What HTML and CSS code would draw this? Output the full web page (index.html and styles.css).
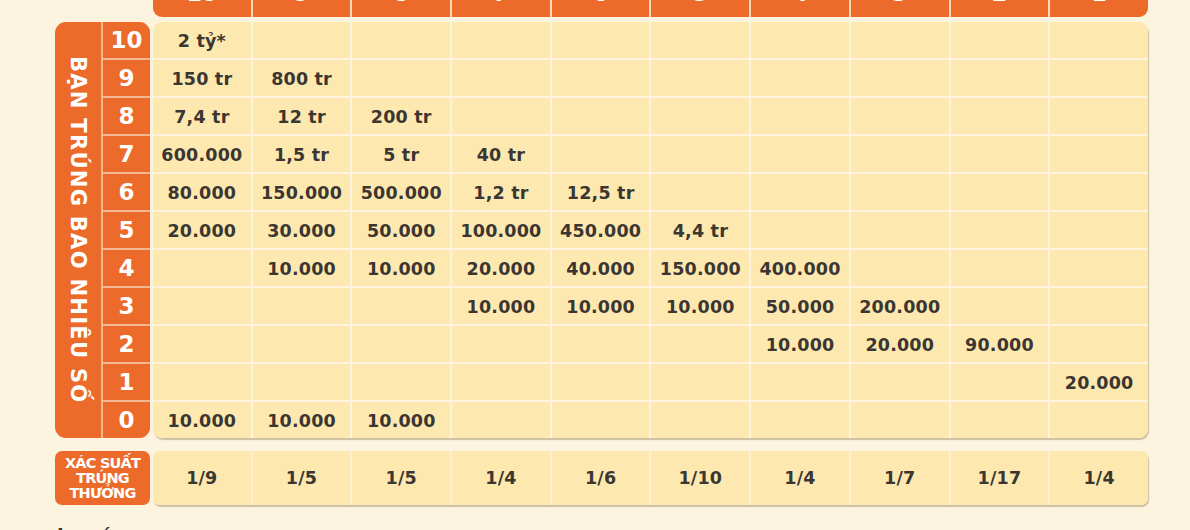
FILE: index.html
```html
<!DOCTYPE html>
<html lang="vi">
<head>
<meta charset="utf-8">
<title>Bảng thưởng</title>
<link rel="stylesheet" href="styles.css">
</head>
<body>
<div class="page">
  <div class="head">
    <div class="hc">10</div><div class="hc">9</div><div class="hc">8</div><div class="hc">7</div><div class="hc">6</div>
    <div class="hc">5</div><div class="hc">4</div><div class="hc">3</div><div class="hc">2</div><div class="hc">1</div>
  </div>

  <div class="side">
    <div class="side-label"><span>BẠN TRÚNG BAO NHIÊU SỐ</span></div>
    <div class="side-nums">
      <div>10</div><div>9</div><div>8</div><div>7</div><div>6</div><div>5</div>
      <div>4</div><div>3</div><div>2</div><div>1</div><div>0</div>
    </div>
  </div>

  <div class="table">
    <div>2 tỷ*</div><div></div><div></div><div></div><div></div><div></div><div></div><div></div><div></div><div></div>
    <div>150 tr</div><div>800 tr</div><div></div><div></div><div></div><div></div><div></div><div></div><div></div><div></div>
    <div>7,4 tr</div><div>12 tr</div><div>200 tr</div><div></div><div></div><div></div><div></div><div></div><div></div><div></div>
    <div>600.000</div><div>1,5 tr</div><div>5 tr</div><div>40 tr</div><div></div><div></div><div></div><div></div><div></div><div></div>
    <div>80.000</div><div>150.000</div><div>500.000</div><div>1,2 tr</div><div>12,5 tr</div><div></div><div></div><div></div><div></div><div></div>
    <div>20.000</div><div>30.000</div><div>50.000</div><div>100.000</div><div>450.000</div><div>4,4 tr</div><div></div><div></div><div></div><div></div>
    <div></div><div>10.000</div><div>10.000</div><div>20.000</div><div>40.000</div><div>150.000</div><div>400.000</div><div></div><div></div><div></div>
    <div></div><div></div><div></div><div>10.000</div><div>10.000</div><div>10.000</div><div>50.000</div><div>200.000</div><div></div><div></div>
    <div></div><div></div><div></div><div></div><div></div><div></div><div>10.000</div><div>20.000</div><div>90.000</div><div></div>
    <div></div><div></div><div></div><div></div><div></div><div></div><div></div><div></div><div></div><div>20.000</div>
    <div>10.000</div><div>10.000</div><div>10.000</div><div></div><div></div><div></div><div></div><div></div><div></div><div></div>
  </div>

  <div class="prob-label">XÁC SUẤT<br>TRÚNG<br>THƯỞNG</div>
  <div class="prob">
    <div>1/9</div><div>1/5</div><div>1/5</div><div>1/4</div><div>1/6</div>
    <div>1/10</div><div>1/4</div><div>1/7</div><div>1/17</div><div>1/4</div>
  </div>

  <div class="note">Lưu ý:</div>
</div>
</body>
</html>
```

FILE: styles.css
```css
html, body {
  margin: 0;
  padding: 0;
  background: #fcf4df;
  overflow: hidden;
}

body {
  font-family: "DejaVu Sans", "Liberation Sans", sans-serif;
  font-weight: 700;
  color: #3b3631;
}

.page {
  display: grid;
  grid-template-columns: 95px 995px;
  column-gap: 3px;
  padding-left: 55px;
  margin-top: -17px;
}

/* top header (cut off) */
.head {
  grid-column: 2;
  height: 34px;
  display: grid;
  grid-template-columns: repeat(10, 1fr);
  column-gap: 2px;
  background: #f7d9b8;
  border-radius: 0 0 9px 9px;
  overflow: hidden;
}

.hc {
  background: #ec6b2b;
  color: #fff;
  font-size: 22px;
  line-height: 22px;
  padding-top: 0;
  text-align: center;
}

/* left side block */
.side {
  grid-column: 1;
  margin-top: 5px;
  height: 416px;
  display: flex;
  background: #ec6b2b;
  border-radius: 11px;
  overflow: hidden;
}

.side-label {
  width: 46px;
  display: flex;
  align-items: center;
  justify-content: center;
  border-right: 2px solid #f4b892;
}

.side-label span {
  writing-mode: vertical-rl;
  color: #fff;
  font-size: 21px;
  letter-spacing: 1.3px;
  white-space: nowrap;
}

.side-nums {
  flex: 1;
  display: grid;
  grid-template-rows: repeat(11, 1fr);
  row-gap: 2px;
  background: #f4b892;
}

.side-nums div {
  background: #ec6b2b;
  color: #fff;
  font-size: 23px;
  display: flex;
  align-items: center;
  justify-content: center;
}

/* main table */
.table {
  grid-column: 2;
  margin-top: 5px;
  height: 416px;
  display: grid;
  grid-template-columns: repeat(10, 1fr);
  grid-template-rows: repeat(11, 1fr);
  gap: 2px;
  background: #fdf3de;
  border-radius: 9px;
  overflow: hidden;
  box-shadow: 1px 2px 1px rgba(120, 95, 50, 0.35);
}

.table div {
  background: #fde9b0;
  font-size: 17.5px;
  letter-spacing: 0.2px;
  display: flex;
  align-items: center;
  justify-content: center;
  padding-top: 2px;
  white-space: nowrap;
}

/* probability row */
.prob-label {
  grid-column: 1;
  margin-top: 13px;
  height: 54px;
  background: #ec6b2b;
  border-radius: 7px;
  color: #fff;
  font-size: 14.5px;
  line-height: 15px;
  letter-spacing: -0.8px;
  text-align: center;
  display: flex;
  align-items: center;
  justify-content: center;
}

.prob {
  grid-column: 2;
  margin-top: 13px;
  height: 54px;
  display: grid;
  grid-template-columns: repeat(10, 1fr);
  gap: 2px;
  background: #fdf0d2;
  border-radius: 7px;
  overflow: hidden;
  box-shadow: 1px 2px 1px rgba(120, 95, 50, 0.35);
}

.prob div {
  background: #fde9b0;
  font-size: 17.5px;
  letter-spacing: 0.2px;
  display: flex;
  align-items: center;
  justify-content: center;
}

.note {
  grid-column: 1 / -1;
  margin-top: 19px;
  margin-left: 2px;
  font-size: 18px;
  line-height: 22px;
}
```
